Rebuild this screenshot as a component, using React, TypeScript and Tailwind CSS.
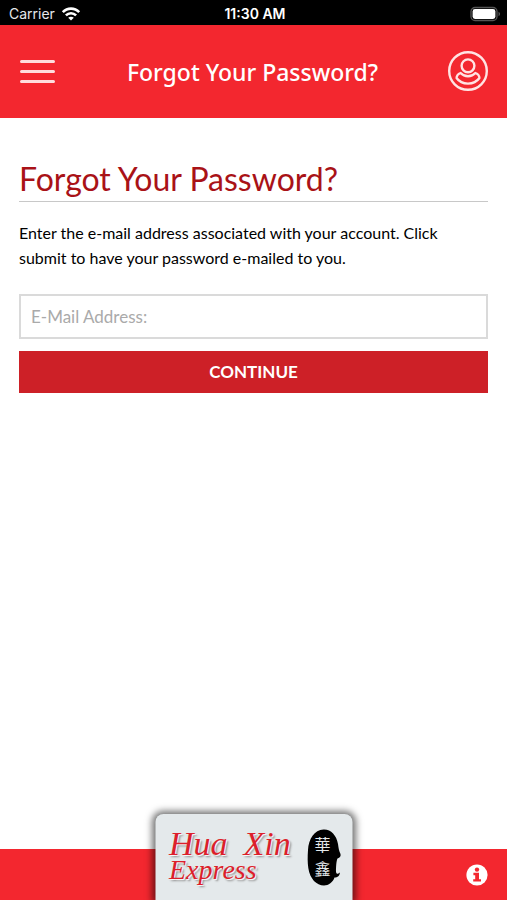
import React, { useState } from "react"

const WifiIcon = () => (
    <svg className="w-5 h-4" viewBox="0 0 20 16" fill="none" stroke="white" strokeWidth="2.6">
        <path d="M1.8 6.2 C6.4 1.4 13.6 1.4 18.2 6.2" />
        <path d="M4.9 9.4 C7.8 6.5 12.2 6.5 15.1 9.4" />
        <path d="M10 14.6 L7.2 11.8 C8.8 10.3 11.2 10.3 12.8 11.8 Z" fill="white" stroke="none" />
    </svg>
)

const BatteryIcon = () => (
    <svg className="w-8 h-4" viewBox="0 0 32 16" fill="none">
        <rect x="2" y="1.5" width="26" height="13" rx="4" stroke="#555" strokeWidth="1.3" />
        <rect x="3.6" y="3.1" width="22.8" height="9.8" rx="2.4" fill="white" />
        <path d="M29.5 5.8 C31.6 6.6 31.6 9.4 29.5 10.2 Z" fill="#555" />
    </svg>
)

const StatusBar = () => (
    <div className="grid grid-cols-3 items-center h-[25px] pt-[2px] pl-[9px] pr-[6px] bg-black text-white text-sm leading-5 font-['Inter',sans-serif]">
        <div className="flex items-center gap-[6px] text-gray-200">
            <span>Carrier</span>
            <WifiIcon />
        </div>
        <span className="text-center font-semibold">11:30 AM</span>
        <div className="flex justify-end">
            <BatteryIcon />
        </div>
    </div>
)

const Header = () => (
    <header className="flex items-center justify-between h-[93px] px-[18px] bg-[#f3272f] text-white">
        <button type="button" aria-label="Menu" className="w-10 h-10">
            <svg className="w-10 h-10" viewBox="0 0 40 40" stroke="#ffdcdc" strokeWidth="3" strokeLinecap="round">
                <path d="M3.5 9.5 H35.5 M3.5 19.5 H35.5 M3.5 29.5 H35.5" />
            </svg>
        </button>
        <span className="text-[23px] leading-8 font-medium font-['Noto_Sans',sans-serif]">Forgot Your Password?</span>
        <button type="button" aria-label="Account" className="w-[42px] h-[42px]">
            <svg className="w-[42px] h-[42px]" viewBox="0 0 42 42" fill="none" stroke="#ffe3e3" strokeWidth="2.4">
                <circle cx="21" cy="20" r="18.8" />
                <circle cx="21" cy="14.8" r="6.4" />
                <path d="M13.6 22 C17.6 26.4 24.4 26.4 28.4 22 C31 23 32.4 25 32.4 27 C29.8 30.8 25.6 32.6 21 32.6 C16.4 32.6 12.2 30.8 9.6 27 C9.6 25 11 23 13.6 22 Z" strokeLinejoin="round" />
            </svg>
        </button>
    </header>
)

const LogoStamp = () => (
    <svg className="w-9 h-[60px]" viewBox="0 0 36 60">
        <path
            d="M17 1.5 C8 2 2 11 1.5 22 C1 29 1 34 1.8 40 C3.5 51 10 57.5 17.5 57.5 C22 57.5 26.5 54 28 49.5 C31 49.5 33.5 47.5 33.3 44.5 C31 46.5 30 46 29.5 44 C29.5 39 29.8 33 31 30.5 C33.5 30 34.5 28 34 26 C32.5 23 32 20 31.5 16 C30 7 24 1 17 1.5 Z"
            fill="black"
        />
        <g fill="#e4e9eb" fontSize="16" fontFamily="'Noto Sans CJK TC', sans-serif" textAnchor="middle">
            <text x="16" y="23">華</text>
            <text x="16" y="47">鑫</text>
        </g>
    </svg>
)

const Footer = () => (
    <footer className="relative flex items-center justify-end h-[51px] px-[18px] bg-[#f3272f]">
        {/* Logo card stands above the bar */}
        <div className="absolute bottom-0 left-1/2 -translate-x-1/2 flex items-start justify-between w-[197px] h-[86px] pl-[14px] pr-[10px] pt-[14px] rounded-t-lg bg-[#e4e9eb] shadow-[0_0_7px_3px_rgba(0,0,0,0.55)]">
            <div className="font-['Liberation_Serif',serif] italic text-[#dc1f2b] [text-shadow:1px_1px_1px_#fff,2px_2px_2px_#888]">
                <div className="flex gap-4 text-[34px] leading-8">
                    <span>Hua</span>
                    <span>Xin</span>
                </div>
                <div className="text-[28px] leading-5">Express</div>
            </div>
            <LogoStamp />
        </div>
        <button type="button" aria-label="Information" className="w-6 h-6">
            <svg className="w-6 h-6" viewBox="0 0 24 24">
                <circle cx="12" cy="12" r="10.6" fill="white" />
                <circle cx="12" cy="6.6" r="2.2" fill="#f3272f" />
                <path d="M8.4 9.8 H14 V16.2 H16 V18.6 H8.2 V16.2 H10.2 V12.2 H8.4 Z" fill="#f3272f" />
            </svg>
        </button>
    </footer>
)

const App: React.FC = () => {
    const [email, setEmail] = useState("")

    return (
        <div className="flex flex-col min-h-screen bg-white font-['Lato',sans-serif]">
            <StatusBar />
            <Header />

            <main className="flex-1 px-[19px] pt-[41px] pb-24">
                <h1 className="pb-[2px] border-b border-[#c8c8c8] text-[32px] leading-10 text-[#a91217]">
                    Forgot Your Password?
                </h1>
                <p className="mt-[18px] text-base leading-[25px] text-black">
                    Enter the e-mail address associated with your account. Click submit to have your password e-mailed to you.
                </p>

                <form onSubmit={(e) => e.preventDefault()} className="mt-6 flex flex-col gap-3">
                    <input
                        type="email"
                        aria-label="E-Mail Address"
                        placeholder="E-Mail Address:"
                        value={email}
                        onChange={(e) => setEmail(e.target.value)}
                        className="w-full h-[45px] px-[10px] border-2 border-[#dadada] text-[17px] text-gray-800 placeholder-[#aaaaaa] focus:outline-none"
                    />
                    <button type="submit" className="w-full h-[42px] bg-[#cd2027] text-white text-[17px] font-bold">
                        CONTINUE
                    </button>
                </form>
            </main>

            <Footer />
        </div>
    )
}

export default App
